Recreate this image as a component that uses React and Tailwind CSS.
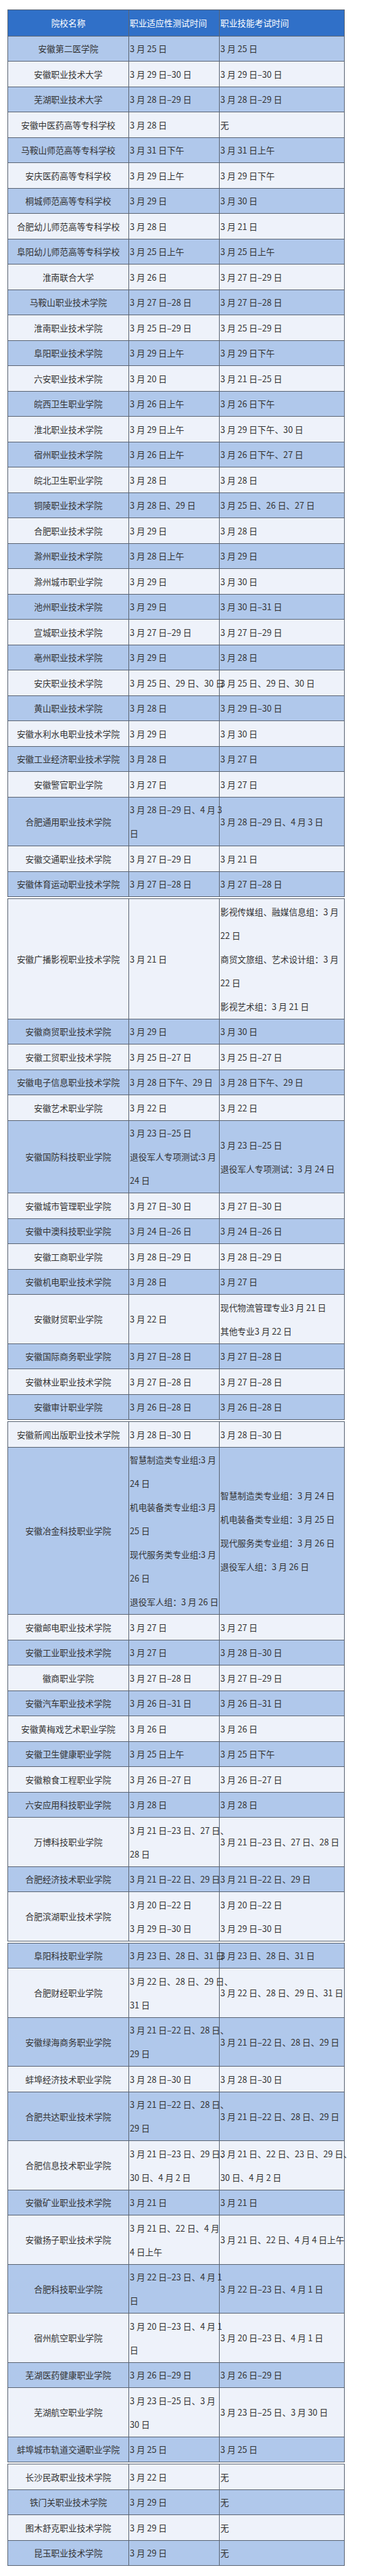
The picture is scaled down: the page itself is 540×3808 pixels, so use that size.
const SEGMENTS = [
  [
    ['安徽第二医学院', '3 月 25 日', '3 月 25 日'],
    ['安徽职业技术大学', '3 月 29 日–30 日', '3 月 29 日–30 日'],
    ['芜湖职业技术大学', '3 月 28 日–29 日', '3 月 28 日–29 日'],
    ['安徽中医药高等专科学校', '3 月 28 日', '无'],
    ['马鞍山师范高等专科学校', '3 月 31 日下午', '3 月 31 日上午'],
    ['安庆医药高等专科学校', '3 月 29 日上午', '3 月 29 日下午'],
    ['桐城师范高等专科学校', '3 月 29 日', '3 月 30 日'],
    ['合肥幼儿师范高等专科学校', '3 月 28 日', '3 月 21 日'],
    ['阜阳幼儿师范高等专科学校', '3 月 25 日上午', '3 月 25 日上午'],
    ['淮南联合大学', '3 月 26 日', '3 月 27 日–29 日'],
    ['马鞍山职业技术学院', '3 月 27 日–28 日', '3 月 27 日–28 日'],
    ['淮南职业技术学院', '3 月 25 日–29 日', '3 月 25 日–29 日'],
    ['阜阳职业技术学院', '3 月 29 日上午', '3 月 29 日下午'],
    ['六安职业技术学院', '3 月 20 日', '3 月 21 日–25 日'],
    ['皖西卫生职业学院', '3 月 26 日上午', '3 月 26 日下午'],
    ['淮北职业技术学院', '3 月 29 日上午', '3 月 29 日下午、30 日'],
    ['宿州职业技术学院', '3 月 26 日上午', '3 月 26 日下午、27 日'],
    ['皖北卫生职业学院', '3 月 28 日', '3 月 28 日'],
    ['铜陵职业技术学院', '3 月 28 日、29 日', '3 月 25 日、26 日、27 日'],
    ['合肥职业技术学院', '3 月 29 日', '3 月 28 日'],
    ['滁州职业技术学院', '3 月 28 日上午', '3 月 29 日'],
    ['滁州城市职业学院', '3 月 29 日', '3 月 30 日'],
    ['池州职业技术学院', '3 月 29 日', '3 月 30 日–31 日'],
    ['宣城职业技术学院', '3 月 27 日–29 日', '3 月 27 日–29 日'],
    ['亳州职业技术学院', '3 月 29 日', '3 月 28 日'],
    ['安庆职业技术学院', '3 月 25 日、29 日、30 日', '3 月 25 日、29 日、30 日'],
    ['黄山职业技术学院', '3 月 28 日', '3 月 29 日–30 日'],
    ['安徽水利水电职业技术学院', '3 月 29 日', '3 月 30 日'],
    ['安徽工业经济职业技术学院', '3 月 28 日', '3 月 27 日'],
    ['安徽警官职业学院', '3 月 27 日', '3 月 27 日'],
    ['合肥通用职业技术学院', ['3 月 28 日–29 日、4 月 3', '日'], '3 月 28 日–29 日、4 月 3 日'],
    ['安徽交通职业技术学院', '3 月 27 日–29 日', '3 月 21 日'],
    ['安徽体育运动职业技术学院', '3 月 27 日–28 日', '3 月 27 日–28 日'],
  ],
  [
    ['安徽广播影视职业技术学院', '3 月 21 日', ['影视传媒组、融媒信息组：3 月', '22 日', '商贸文旅组、艺术设计组：3 月', '22 日', '影视艺术组：3 月 21 日']],
    ['安徽商贸职业技术学院', '3 月 29 日', '3 月 30 日'],
    ['安徽工贸职业技术学院', '3 月 25 日–27 日', '3 月 25 日–27 日'],
    ['安徽电子信息职业技术学院', '3 月 28 日下午、29 日', '3 月 28 日下午、29 日'],
    ['安徽艺术职业学院', '3 月 22 日', '3 月 22 日'],
    ['安徽国防科技职业学院', ['3 月 23 日–25 日', '退役军人专项测试:3 月', '24 日'], ['3 月 23 日–25 日', '退役军人专项测试：3 月 24 日']],
    ['安徽城市管理职业学院', '3 月 27 日–30 日', '3 月 27 日–30 日'],
    ['安徽中澳科技职业学院', '3 月 24 日–26 日', '3 月 24 日–26 日'],
    ['安徽工商职业学院', '3 月 28 日–29 日', '3 月 28 日–29 日'],
    ['安徽机电职业技术学院', '3 月 28 日', '3 月 27 日'],
    ['安徽财贸职业学院', '3 月 22 日', ['现代物流管理专业3 月 21 日', '其他专业3 月 22 日']],
    ['安徽国际商务职业学院', '3 月 27 日–28 日', '3 月 27 日–28 日'],
    ['安徽林业职业技术学院', '3 月 27 日–28 日', '3 月 27 日–28 日'],
    ['安徽审计职业学院', '3 月 26 日–28 日', '3 月 26 日–28 日'],
  ],
  [
    ['安徽新闻出版职业技术学院', '3 月 28 日–30 日', '3 月 28 日–30 日'],
    ['安徽冶金科技职业学院', ['智慧制造类专业组:3 月', '24 日', '机电装备类专业组:3 月', '25 日', '现代服务类专业组:3 月', '26 日', '退役军人组：3 月 26 日'], ['智慧制造类专业组：3 月 24 日', '机电装备类专业组：3 月 25 日', '现代服务类专业组：3 月 26 日', '退役军人组：3 月 26 日']],
    ['安徽邮电职业技术学院', '3 月 27 日', '3 月 27 日'],
    ['安徽工业职业技术学院', '3 月 27 日', '3 月 28 日–30 日'],
    ['徽商职业学院', '3 月 27 日–28 日', '3 月 27 日–29 日'],
    ['安徽汽车职业技术学院', '3 月 26 日–31 日', '3 月 26 日–31 日'],
    ['安徽黄梅戏艺术职业学院', '3 月 26 日', '3 月 26 日'],
    ['安徽卫生健康职业学院', '3 月 25 日上午', '3 月 25 日下午'],
    ['安徽粮食工程职业学院', '3 月 26 日–27 日', '3 月 26 日–27 日'],
    ['六安应用科技职业学院', '3 月 28 日', '3 月 28 日'],
    ['万博科技职业学院', ['3 月 21 日–23 日、27 日、', '28 日'], '3 月 21 日–23 日、27 日、28 日'],
    ['合肥经济技术职业学院', '3 月 21 日–22 日、29 日', '3 月 21 日–22 日、29 日'],
    ['合肥滨湖职业技术学院', ['3 月 20 日–22 日', '3 月 29 日–30 日'], ['3 月 20 日–22 日', '3 月 29 日–30 日']],
  ],
  [
    ['阜阳科技职业学院', '3 月 23 日、28 日、31 日', '3 月 23 日、28 日、31 日'],
    ['合肥财经职业学院', ['3 月 22 日、28 日、29 日、', '31 日'], '3 月 22 日、28 日、29 日、31 日'],
    ['安徽绿海商务职业学院', ['3 月 21 日–22 日、28 日、', '29 日'], '3 月 21 日–22 日、28 日、29 日'],
    ['蚌埠经济技术职业学院', '3 月 28 日–30 日', '3 月 28 日–30 日'],
    ['合肥共达职业技术学院', ['3 月 21 日–22 日、28 日、', '29 日'], '3 月 21 日–22 日、28 日、29 日'],
    ['合肥信息技术职业学院', ['3 月 21 日–23 日、29 日、', '30 日、4 月 2 日'], ['3 月 21 日、22 日、23 日、29 日、', '30 日、4 月 2 日']],
    ['安徽矿业职业技术学院', '3 月 21 日', '3 月 21 日'],
    ['安徽扬子职业技术学院', ['3 月 21 日、22 日、4 月', '4 日上午'], '3 月 21 日、22 日、4 月 4 日上午'],
    ['合肥科技职业学院', ['3 月 22 日–23 日、4 月 1', '日'], '3 月 22 日–23 日、4 月 1 日'],
    ['宿州航空职业学院', ['3 月 20 日–23 日、4 月 1', '日'], '3 月 20 日–23 日、4 月 1 日'],
    ['芜湖医药健康职业学院', '3 月 26 日–29 日', '3 月 26 日–29 日'],
    ['芜湖航空职业学院', ['3 月 23 日–25 日、3 月', '30 日'], '3 月 23 日–25 日、3 月 30 日'],
    ['蚌埠城市轨道交通职业学院', '3 月 25 日', '3 月 25 日'],
  ],
  [
    ['长沙民政职业技术学院', '3 月 22 日', '无'],
    ['铁门关职业技术学院', '3 月 29 日', '无'],
    ['图木舒克职业技术学院', '3 月 29 日', '无'],
    ['昆玉职业技术学院', '3 月 29 日', '无'],
  ],
];

const cellBase =
  'border border-[#5b6574] py-[0.75px] leading-[35px] align-middle whitespace-nowrap';

function Lines({ value }) {
  const lines = Array.isArray(value) ? value : [value];
  return lines.map((l, i) => (
    <div key={i} className="whitespace-pre">
      {l}
    </div>
  ));
}

function Segment({ rows, start, withHeader }) {
  return (
    <table className="w-[498px] table-fixed border-collapse border border-[#5b6574]">
      <colgroup>
        <col className="w-[179px]" />
        <col className="w-[134px]" />
        <col className="w-[185px]" />
      </colgroup>
      <tbody>
        {withHeader && (
          <tr className="bg-[#3070c8] text-white">
            <td className={`${cellBase} py-[1.25px] text-center`}>院校名称</td>
            <td className={`${cellBase} py-[1.25px] pl-[1px] text-left`}>职业适应性测试时间</td>
            <td className={`${cellBase} py-[1.25px] pl-[1px] text-left`}>职业技能考试时间</td>
          </tr>
        )}
        {rows.map((r, i) => {
          const n = start + i + 1;
          const bg = n % 2 === 1 ? 'bg-[#b0c8eb]' : 'bg-[#eef2fa]';
          return (
            <tr key={i} className={bg}>
              <td className={`${cellBase} text-center`}>{r[0]}</td>
              <td className={`${cellBase} pl-[1px] text-left`}>
                <Lines value={r[1]} />
              </td>
              <td className={`${cellBase} pl-[1px] text-left`}>
                <Lines value={r[2]} />
              </td>
            </tr>
          );
        })}
      </tbody>
    </table>
  );
}

export default function App() {
  const starts = [];
  let acc = 0;
  SEGMENTS.forEach((s) => {
    starts.push(acc);
    acc += s.length;
  });
  return (
    <div className="bg-white w-[540px] min-h-[3808px] pt-[14px] pl-[11px] font-['Noto_Sans_CJK_SC',sans-serif] text-[12.7px] text-[#333]">
      <div className="flex flex-col gap-[2px] w-[498px]">
        {SEGMENTS.map((seg, si) => (
          <Segment key={si} rows={seg} start={starts[si]} withHeader={si === 0} />
        ))}
      </div>
    </div>
  );
}
